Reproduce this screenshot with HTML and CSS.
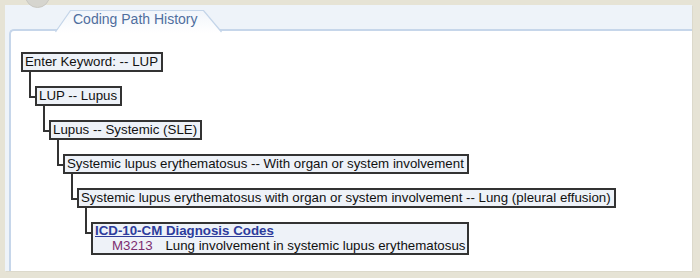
FILE: index.html
```html
<!DOCTYPE html>
<html>

<head>
    <meta content="text/html; charset=utf-8" http-equiv="Content-Type">
    <title>Coding Path History</title>

    <link rel="stylesheet" href="styles.css">
</head>

<body>

    <div class="frame">
        <span class="knob"></span>
        <div class="panel">
            <div class="tabBar">
                <div class="tab">
                    <svg class="tabShape" width="168" height="23" viewBox="0 0 168 23">
                        <defs>
                            <linearGradient id="tabFill" x1="0" y1="0" x2="0" y2="1">
                                <stop offset="0" stop-color="#f1f5fa"/>
                                <stop offset="1" stop-color="#ffffff"/>
                            </linearGradient>
                        </defs>
                        <path d="M0 23 L15.5 0.5 L148.5 0.5 L167 23 Z" fill="url(#tabFill)"/>
                        <path d="M0.5 22 L15.5 0.5 L148.5 0.5 L166.5 22" fill="none" stroke="#c4d5e9" stroke-width="1.2"/>
                    </svg>
                    <span class="tabLabel">Coding Path History</span>
                </div>
            </div>
            <div class="content">
                <ul class="pathTree">
                    <li class="pathNode depth0">Enter Keyword: -- LUP</li>
                    <li class="pathNode depth1">LUP -- Lupus</li>
                    <li class="pathNode depth2">Lupus -- Systemic (SLE)</li>
                    <li class="pathNode depth3">Systemic lupus erythematosus -- With organ or system involvement</li>
                    <li class="pathNode depth4">Systemic lupus erythematosus with organ or system involvement -- Lung (pleural effusion)</li>
                    <li class="pathNode depth5 resultNode">
                        <a class="codesLink" href="#">ICD-10-CM Diagnosis Codes</a>
                        <div class="codeRow">
                            <span class="codeId">M3213</span>
                            <span class="codeDesc">Lung involvement in systemic lupus erythematosus</span>
                        </div>
                    </li>
                </ul>
            </div>
        </div>
    </div>

</body>

</html>
```

FILE: styles.css
```css
body {
    margin: 0;
    background: #e6e3d5;
    font-family: "Liberation Sans", Arial, sans-serif;
}

.frame {
    position: relative;
    height: 278px;
    padding: 5px 8px 7px 5px;
    box-sizing: border-box;
    overflow: hidden;
}

.knob {
    position: absolute;
    left: 25px;
    top: -17px;
    width: 23px;
    height: 23px;
    border-radius: 50%;
    background: #d6d5cf;
    border: 1px solid #c9c8c2;
}

.panel {
    display: flex;
    flex-direction: column;
    height: 266px;
    background: #eef3f9;
    box-shadow: 1px 1px 0 #dcd9cb;
}

.tabBar {
    display: flex;
    align-items: flex-end;
    height: 24px;
    padding-left: 50px;
}

.tab {
    position: relative;
    width: 168px;
    height: 21px;
    margin-bottom: -2px;
    z-index: 1;
}

.tabShape {
    position: absolute;
    left: 0;
    top: 0;
}

.tabLabel {
    position: relative;
    display: block;
    padding-top: 1px;
    padding-left: 18px;
    font-size: 14px;
    line-height: 16px;
    color: #4f6e9e;
}

.content {
    flex: 1;
    margin-left: 4px;
    background: #ffffff;
    border-left: 2px solid #c6d6ea;
    border-top: 2px solid #c6d6ea;
    border-top-left-radius: 5px;
}

.pathTree {
    list-style: none;
    margin: 0;
    padding: 21px 0 0 10px;
}

.pathNode {
    position: relative;
    box-sizing: border-box;
    width: fit-content;
    margin-top: 14px;
    padding: 0 3px 0 2px;
    border: 2px solid #333333;
    background: #eef2f8;
    font-size: 13.3px;
    line-height: 16px;
    color: #111111;
    white-space: nowrap;
}

.pathNode::before {
    content: "";
    position: absolute;
    left: -8px;
    top: -16px;
    width: 6px;
    height: 26px;
    box-sizing: border-box;
    border-left: 2px solid #333333;
    border-bottom: 2px solid #333333;
}

.depth0 {
    margin-top: 0;
}

.depth0::before {
    display: none;
}

.depth1 { margin-left: 14px; }
.depth2 { margin-left: 28px; }
.depth3 { margin-left: 42px; }
.depth4 { margin-left: 56px; }
.depth5 { margin-left: 70px; }

.resultNode {
    padding: 0 2px;
    line-height: 14.5px;
}

.codesLink {
    font-weight: bold;
    color: #2d3c9c;
    text-decoration: underline;
}

.codeRow {
    padding-left: 17px;
}

.codeId {
    color: #7d2d70;
    margin-right: 9px;
}
```
